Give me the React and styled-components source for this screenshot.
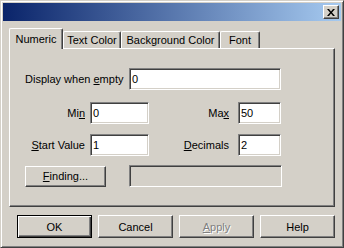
import React from 'react';
import styled, { createGlobalStyle, css } from 'styled-components';

const GlobalStyle = createGlobalStyle`
  html, body {
    margin: 0;
    padding: 0;
    background: #d4d0c8;
  }
  body {
    font-family: "Liberation Sans", Arial, sans-serif;
    font-size: 11px;
    color: #000;
  }
`;

const Window = styled.div`
  width: 344px;
  height: 248px;
  box-sizing: border-box;
  background: #d4d0c8;
  border: 1px solid;
  border-color: #d4d0c8 #404040 #404040 #d4d0c8;
  box-shadow: inset 1px 1px #fff, inset -1px -1px #808080;
  padding: 2px;
  display: flex;
  flex-direction: column;
`;

const TitleBar = styled.div`
  height: 18px;
  flex-shrink: 0;
  background: linear-gradient(to right, #0a246a, #a6caf0);
  display: flex;
  align-items: center;
  justify-content: flex-end;
  padding-right: 2px;
`;

const CloseButton = styled.div`
  width: 16px;
  height: 14px;
  box-sizing: border-box;
  background: #d4d0c8;
  border: 1px solid;
  border-color: #fff #404040 #404040 #fff;
  box-shadow: inset -1px -1px #808080;
  display: flex;
  align-items: center;
  justify-content: center;
`;

const Body = styled.div`
  padding: 7px 6px 0 6px;
  display: flex;
  flex-direction: column;
`;

const TabRow = styled.div`
  height: 20px;
  display: flex;
  align-items: flex-end;
  position: relative;
  z-index: 1;
`;

const Tab = styled.div`
  width: ${(p) => p.$w}px;
  height: 17px;
  box-sizing: border-box;
  background: #d4d0c8;
  border: 1px solid;
  border-bottom: none;
  border-color: #fff #404040 #404040 #fff;
  border-radius: 2px 2px 0 0;
  box-shadow: inset -1px 0 #808080;
  display: flex;
  align-items: center;
  justify-content: center;
  white-space: nowrap;
  ${(p) =>
    p.$active &&
    css`
      height: 21px;
      margin-bottom: -1px;
      padding-bottom: 1px;
    `}
`;

const Panel = styled.div`
  height: 159px;
  box-sizing: border-box;
  border: 1px solid;
  border-color: #fff #404040 #404040 #fff;
  box-shadow: inset -1px -1px #808080;
  padding: 19px 0 0 15px;
  display: flex;
  flex-direction: column;
`;

const Row = styled.div`
  display: flex;
  align-items: center;
  margin-top: ${(p) => p.$mt || 0}px;
`;

const Label = styled.div`
  width: ${(p) => p.$w}px;
  box-sizing: border-box;
  white-space: nowrap;
  text-align: ${(p) => (p.$right ? 'right' : 'left')};
  padding-right: ${(p) => p.$pr || 0}px;
`;

const Field = styled.div`
  width: ${(p) => p.$w}px;
  height: 22px;
  box-sizing: border-box;
  background: ${(p) => (p.$disabled ? '#d4d0c8' : '#fff')};
  border: 1px solid;
  border-color: #808080 #fff #fff #808080;
  box-shadow: inset 1px 1px #404040, inset -1px -1px #d4d0c8;
  padding: 0 2px;
  margin-left: ${(p) => p.$ml || 0}px;
  display: flex;
  align-items: center;
`;

const Button = styled.div`
  width: ${(p) => p.$w || 75}px;
  height: ${(p) => p.$h || 23}px;
  box-sizing: border-box;
  background: #d4d0c8;
  border: 1px solid;
  border-color: #fff #404040 #404040 #fff;
  box-shadow: inset -1px -1px #808080;
  display: flex;
  align-items: center;
  justify-content: center;
  ${(p) =>
    p.$default &&
    css`
      border-color: #000;
      box-shadow: inset 1px 1px #fff, inset -1px -1px #404040, inset -2px -2px #808080;
    `}
  ${(p) =>
    p.$disabled &&
    css`
      color: #808080;
      text-shadow: 1px 1px #fff;
    `}
`;

const ButtonRow = styled.div`
  display: flex;
  gap: 6px;
  margin: 8px 0 0 8px;
`;

const tabs = [
  { name: 'Numeric', w: 54, active: true },
  { name: 'Text Color', w: 58 },
  { name: 'Background Color', w: 99 },
  { name: 'Font', w: 40 },
];

export default function App() {
  return (
    <>
      <GlobalStyle />
      <Window>
        <TitleBar>
          <CloseButton>
            <svg width="8" height="7" viewBox="0 0 8 7">
              <path d="M0 0h2l2 2.5L6 0h2L5 3.5 8 7H6L4 4.5 2 7H0l3-3.5z" fill="#000" />
            </svg>
          </CloseButton>
        </TitleBar>
        <Body>
          <TabRow>
            {tabs.map((t) => (
              <Tab key={t.name} $w={t.w} $active={t.active}>
                {t.name}
              </Tab>
            ))}
          </TabRow>
          <Panel>
            <Row>
              <Label $w={104}>
                Display when <u>e</u>mpty
              </Label>
              <Field $w={152}>0</Field>
            </Row>
            <Row $mt={12}>
              <Label $w={65} $right $pr={5}>
                Mi<u>n</u>
              </Label>
              <Field $w={59}>0</Field>
              <Label $w={89} $right $pr={9}>
                Ma<u>x</u>
              </Label>
              <Field $w={43}>50</Field>
            </Row>
            <Row $mt={10}>
              <Label $w={65} $right $pr={5}>
                <u>S</u>tart Value
              </Label>
              <Field $w={59}>1</Field>
              <Label $w={89} $right $pr={9}>
                <u>D</u>ecimals
              </Label>
              <Field $w={43}>2</Field>
            </Row>
            <Row $mt={9}>
              <Button $w={81} $h={21}>
                <span>
                  <u>F</u>inding...
                </span>
              </Button>
              <Field $w={153} $ml={23} $disabled />
            </Row>
          </Panel>
          <ButtonRow>
            <Button $default>OK</Button>
            <Button>Cancel</Button>
            <Button $disabled>
              <span>
                <u>A</u>pply
              </span>
            </Button>
            <Button>Help</Button>
          </ButtonRow>
        </Body>
      </Window>
    </>
  );
}
